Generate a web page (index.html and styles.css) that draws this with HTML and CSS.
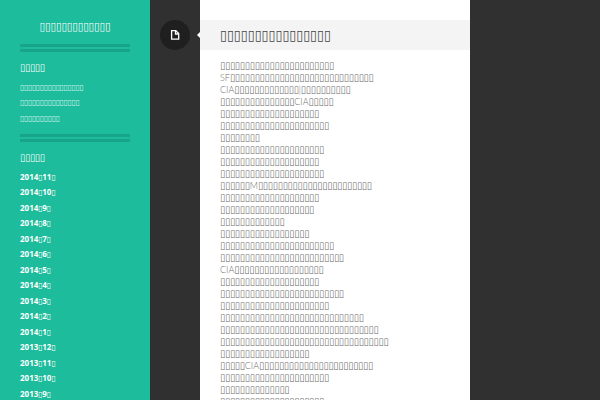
FILE: index.html
```
<!DOCTYPE html>
<html lang="ja">
<head>
    <meta charset="UTF-8">
    <meta name="viewport" content="width=device-width, initial-scale=1.0">
    <title>▯▯▯▯▯▯▯▯▯▯▯▯▯</title>
    <link rel="stylesheet" href="styles.css">
</head>
<body>
    <aside class="sidebar">
        <h1 class="site-title"><a href="#">▯▯▯▯▯▯▯▯▯▯▯▯▯</a></h1>

        <div class="widget">
            <h2 class="widget-title">▯▯▯▯▯</h2>
            <ul class="recent">
                <li><a href="#">▯▯▯▯▯▯▯▯▯▯▯▯▯▯▯▯</a></li>
                <li><a href="#">▯▯▯▯▯▯▯▯▯▯▯▯▯▯▯</a></li>
                <li><a href="#">▯▯▯▯▯▯▯▯▯▯</a></li>
            </ul>
        </div>

        <div class="widget">
            <h2 class="widget-title">▯▯▯▯▯</h2>
            <ul class="archive">
                <li><a href="#"><b>2014</b>▯<b>11</b>▯</a></li>
                <li><a href="#"><b>2014</b>▯<b>10</b>▯</a></li>
                <li><a href="#"><b>2014</b>▯<b>9</b>▯</a></li>
                <li><a href="#"><b>2014</b>▯<b>8</b>▯</a></li>
                <li><a href="#"><b>2014</b>▯<b>7</b>▯</a></li>
                <li><a href="#"><b>2014</b>▯<b>6</b>▯</a></li>
                <li><a href="#"><b>2014</b>▯<b>5</b>▯</a></li>
                <li><a href="#"><b>2014</b>▯<b>4</b>▯</a></li>
                <li><a href="#"><b>2014</b>▯<b>3</b>▯</a></li>
                <li><a href="#"><b>2014</b>▯<b>2</b>▯</a></li>
                <li><a href="#"><b>2014</b>▯<b>1</b>▯</a></li>
                <li><a href="#"><b>2013</b>▯<b>12</b>▯</a></li>
                <li><a href="#"><b>2013</b>▯<b>11</b>▯</a></li>
                <li><a href="#"><b>2013</b>▯<b>10</b>▯</a></li>
                <li><a href="#"><b>2013</b>▯<b>9</b>▯</a></li>
            </ul>
        </div>
    </aside>

    <main class="main">
        <div class="post-format">
            <a class="format-icon" href="#" aria-label="▯▯">
                <svg width="10" height="10" viewBox="0 0 10 10" fill="none" stroke="#fff" stroke-width="1.3">
                    <path d="M1.6 .7H5.8L8.7 3.6V9.1H1.6Z"/>
                    <path d="M5.5 .8V4H8.6"/>
                </svg>
            </a>
        </div>

        <article class="post">
            <h2 class="post-title">▯▯▯▯▯▯▯▯▯▯▯▯▯▯▯▯</h2>
            <p class="post-body">
                ▯▯▯▯▯▯▯▯▯▯▯▯▯▯▯▯▯▯▯▯▯▯▯<br>
                <span class="latin">SF</span>▯▯▯▯▯▯▯▯▯▯▯▯▯▯▯▯▯▯▯▯▯▯▯▯▯▯▯▯▯<br>
                <span class="latin">CIA</span>▯▯▯▯▯▯▯▯▯▯▯▯▯<span class="latin">|</span>▯▯▯▯▯▯▯▯▯▯<br>
                ▯▯▯▯▯▯▯▯▯▯▯▯▯▯▯<span class="latin">CIA</span>▯▯▯▯▯<br>
                ▯▯▯▯▯▯▯▯▯▯▯▯▯▯▯▯▯▯▯▯<br>
                ▯▯▯▯▯▯▯▯▯▯▯▯▯▯▯▯▯▯▯▯▯▯<br>
                ▯▯▯▯▯▯▯▯<br>
                ▯▯▯▯▯▯▯▯▯▯▯▯▯▯▯▯▯▯▯▯▯<br>
                ▯▯▯▯▯▯▯▯▯▯▯▯▯▯▯▯▯▯▯▯<br>
                ▯▯▯▯▯▯▯▯▯▯▯▯▯▯▯▯▯▯▯▯▯<br>
                ▯▯▯▯▯▯<span class="latin">M</span>▯▯▯▯▯▯▯▯▯▯▯▯▯▯▯▯▯▯▯▯▯▯▯<br>
                ▯▯▯▯▯▯▯▯▯▯▯▯▯▯▯▯▯▯▯▯<br>
                ▯▯▯▯▯▯▯▯▯▯▯▯▯▯▯▯▯▯▯<br>
                ▯▯▯▯▯▯▯▯▯▯▯▯▯<br>
                ▯▯▯▯▯▯▯▯▯▯▯▯▯▯▯▯▯▯<br>
                ▯▯▯▯▯▯▯▯▯▯▯▯▯▯▯▯▯▯▯▯▯▯▯<br>
                ▯▯▯▯▯▯▯▯▯▯▯▯▯▯▯▯▯▯▯▯▯▯▯▯▯<br>
                <span class="latin">CIA</span>▯▯▯▯▯▯▯▯▯▯▯▯▯▯▯▯▯▯<br>
                ▯▯▯▯▯▯▯▯▯▯▯▯▯▯▯▯▯▯▯▯<br>
                ▯▯▯▯▯▯▯▯▯▯▯▯▯▯▯▯▯▯▯▯▯▯▯▯▯<br>
                ▯▯▯▯▯▯▯▯▯▯▯▯▯▯▯▯▯▯▯▯▯▯<br>
                ▯▯▯▯▯▯▯▯▯▯▯▯▯▯▯▯▯▯▯▯▯▯▯▯▯▯▯▯▯<br>
                ▯▯▯▯▯▯▯▯▯▯▯▯▯▯▯▯▯▯▯▯▯▯▯▯▯▯▯▯▯▯▯▯<br>
                ▯▯▯▯▯▯▯▯▯▯▯▯▯▯▯▯▯▯▯▯▯▯▯▯▯▯▯▯▯▯▯▯▯▯<br>
                ▯▯▯▯▯▯▯▯▯▯▯▯▯▯▯▯▯▯<br>
                ▯▯▯▯▯<span class="latin">CIA</span>▯▯▯▯▯▯▯▯▯▯▯▯▯▯▯▯▯▯▯▯▯▯▯<br>
                ▯▯▯▯▯▯▯▯▯▯▯▯▯▯▯▯▯▯▯▯▯▯<br>
                ▯▯▯▯▯▯▯▯▯▯▯▯▯▯<br>
                ▯▯▯▯▯▯▯▯▯▯▯▯▯▯▯▯▯▯▯▯▯
            </p>
        </article>
    </main>
</body>
</html>
```
FILE: styles.css
```
*, *::before { box-sizing: border-box; }
body { margin: 0; display: flex; height: 100vh; overflow: hidden; background-color: #303030; font-family: "DejaVu Sans Condensed", sans-serif; font-size: 10px; line-height: 12px; }
a { color: inherit; text-decoration: none; }
h1, h2, p, ul { margin: 0; padding: 0; font-weight: normal; }
ul { list-style: none; }

/* sidebar */
.sidebar { width: 25%; padding: 20px; overflow: hidden; background-color: #1dbc9c; color: #fff; }
.site-title { padding-bottom: 10px; font-size: 11px; line-height: 14px; text-align: center; }
.widget { margin-bottom: 8px; }
.widget::before { content: ""; display: block; height: 8px; margin-bottom: 9px; border-top: 3px solid #18a488; border-bottom: 3px solid #18a488; }
.widget-title { margin-bottom: 5px; font-size: 10px; line-height: 14px; }
.recent, .archive { display: grid; grid-auto-rows: 15px 16px; font-size: 8px; line-height: 16px; }
.recent { color: #d2f2eb; }
.archive { line-height: 14px; }
.archive b { font-family: "Open Sans", sans-serif; }

/* post */
.main { flex: 1; display: flex; }
.post-format { width: 50px; padding: 20px 10px; }
.format-icon { display: flex; align-items: center; justify-content: center; width: 30px; height: 30px; border-radius: 50%; background-color: #1f1f1f; }
.post { position: relative; width: 60%; padding-top: 20px; background-color: #fff; color: #6c6c6c; }
.post::before { content: ""; position: absolute; top: 32px; left: -3px; border: 3px solid transparent; border-right-color: #fff; border-left: 0; }
.post-title { padding: 0 20px; background-color: #f4f4f4; color: #444; font-size: 14px; line-height: 30px; }
.post-body { padding: 10px 20px; }
.latin { font-family: Lato, sans-serif; font-size: 9px; font-weight: 300; }
```
